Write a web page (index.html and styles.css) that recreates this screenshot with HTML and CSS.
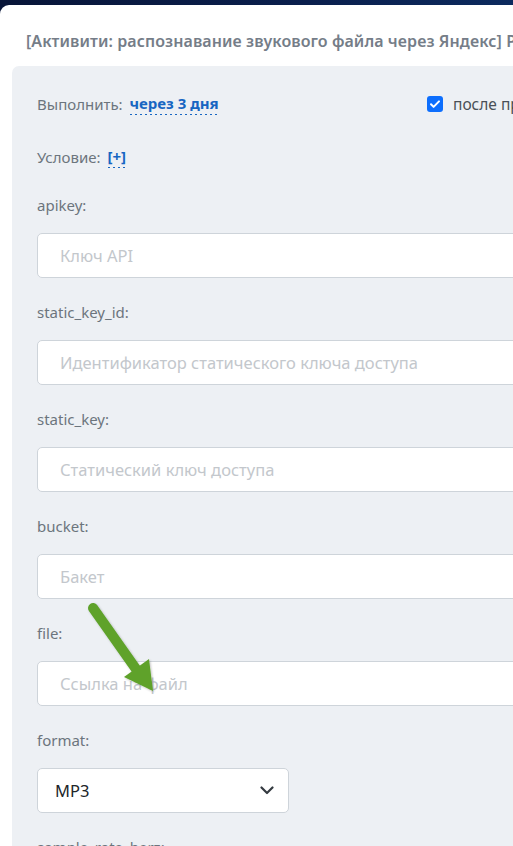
FILE: index.html
```html
<!DOCTYPE html>
<html lang="ru">
<head>
<meta charset="utf-8">
<title>Активити</title>
<link rel="stylesheet" href="styles.css">
</head>
<body>
<div class="screen">
  <div class="modal">
    <div class="modal-title">[Активити: распознавание звукового файла через Яндекс] Редактирование параметров</div>
    <div class="panel">
      <div class="row-top">
        <div class="run">
          <span class="lbl">Выполнить:</span>
          <span class="link">через 3 дня</span>
        </div>
        <label class="after">
          <span class="check"><svg viewBox="0 0 16 16" width="16" height="16"><path d="M4 8.3l2.6 2.6L12 5.4" fill="none" stroke="#fff" stroke-width="2" stroke-linecap="round" stroke-linejoin="round"/></svg></span>
          <span class="after-text">после предыдущего шага</span>
        </label>
      </div>
      <div class="row-cond">
        <span class="lbl">Условие:</span>
        <span class="link">[+]</span>
      </div>

      <div class="field">
        <div class="lbl">apikey:</div>
        <div class="input"><span class="ph">Ключ API</span></div>
      </div>
      <div class="field">
        <div class="lbl">static_key_id:</div>
        <div class="input"><span class="ph">Идентификатор статического ключа доступа</span></div>
      </div>
      <div class="field">
        <div class="lbl">static_key:</div>
        <div class="input"><span class="ph">Статический ключ доступа</span></div>
      </div>
      <div class="field">
        <div class="lbl">bucket:</div>
        <div class="input"><span class="ph">Бакет</span></div>
      </div>
      <div class="field">
        <div class="lbl">file:</div>
        <div class="input"><span class="ph">Ссылка на файл</span></div>
      </div>
      <div class="field">
        <div class="lbl">format:</div>
        <div class="select"><span class="val">MP3</span>
          <svg class="chev" viewBox="0 0 14 9" width="14" height="9"><path d="M1.5 1.5L7 7l5.5-5.5" fill="none" stroke="#343a40" stroke-width="2.2" stroke-linecap="round" stroke-linejoin="round"/></svg>
        </div>
      </div>
      <div class="field">
        <div class="lbl">sample_rate_herz:</div>
      </div>
    </div>
  </div>
  <svg class="arrow" viewBox="0 0 90 110" width="90" height="110">
    <defs>
      <filter id="sh" x="-20%" y="-20%" width="140%" height="140%">
        <feDropShadow dx="1" dy="1" stdDeviation="1.2" flood-color="#000" flood-opacity="0.25"/>
      </filter>
    </defs>
    <g filter="url(#sh)">
      <line x1="13" y1="13" x2="56" y2="74" stroke="#5fa22c" stroke-width="10" stroke-linecap="round"/>
      <polygon points="44,82 69,64 73,96" fill="#5fa22c"/>
    </g>
  </svg>
</div>
</body>
</html>
```

FILE: styles.css
```css
html, body {
  margin: 0;
  padding: 0;
  overflow: hidden;
  height: 846px;
}
body {
  font-family: "Noto Sans", "Open Sans", sans-serif;
  background: #fff;
}
.screen {
  position: relative;
  width: 513px;
  height: 846px;
  overflow: hidden;
  background: linear-gradient(90deg, #081538 0%, #0a1f4d 60%, #0c2a5e 100%);
  padding-top: 5px;
  box-sizing: border-box;
}
.modal {
  width: 800px;
  height: 900px;
  background: #fff;
  border-top-left-radius: 9px;
}
.modal-title {
  height: 61px;
  box-sizing: border-box;
  padding: 25px 0 0 26px;
  font-size: 16px;
  font-weight: 600;
  color: #757d88;
  white-space: nowrap;
  line-height: 22px;
  letter-spacing: 0.08px;
}
.panel {
  margin-left: 12px;
  background: #edf0f4;
  border-top-left-radius: 7px;
  padding: 24px 0 0 25px;
  height: 900px;
}
.lbl {
  font-size: 15px;
  color: #6c757d;
  line-height: 20px;
  white-space: nowrap;
}
.link {
  font-size: 15px;
  font-weight: 700;
  color: #1766c2;
  line-height: 20px;
  padding-bottom: 2px;
  background-image: linear-gradient(90deg, #1766c2 2px, transparent 2px);
  background-size: 5px 1px;
  background-repeat: repeat-x;
  background-position: 0 100%;
  white-space: nowrap;
}
.row-top {
  display: grid;
  grid-template-columns: 390px auto;
  align-items: center;
  height: 28px;
}
.run, .row-cond {
  display: flex;
  align-items: center;
  gap: 7px;
}
.after {
  display: flex;
  align-items: center;
  gap: 10px;
}
.check {
  width: 16px;
  height: 16px;
  border-radius: 3px;
  background: #0d6efd;
  display: flex;
  align-items: center;
  justify-content: center;
}
.after-text {
  font-size: 15.5px;
  color: #495057;
  white-space: nowrap;
}
.row-cond {
  margin-top: 25px;
  height: 28px;
}
.field {
  margin-top: 24px;
}
.field .lbl {
  height: 20px;
}
.input, .select {
  margin-top: 18px;
  height: 45px;
  box-sizing: border-box;
  background: #fff;
  border: 1px solid #ced4da;
  border-radius: 5px;
  display: flex;
  align-items: center;
  padding-left: 22px;
}
.ph {
  font-size: 16.5px;
  color: #c3c7cc;
  white-space: nowrap;
}
.select {
  width: 252px;
  padding-left: 17px;
  padding-right: 14px;
  justify-content: space-between;
}
.val {
  font-size: 16.5px;
  color: #212529;
}
.arrow {
  position: absolute;
  left: 80px;
  top: 595px;
}
```
